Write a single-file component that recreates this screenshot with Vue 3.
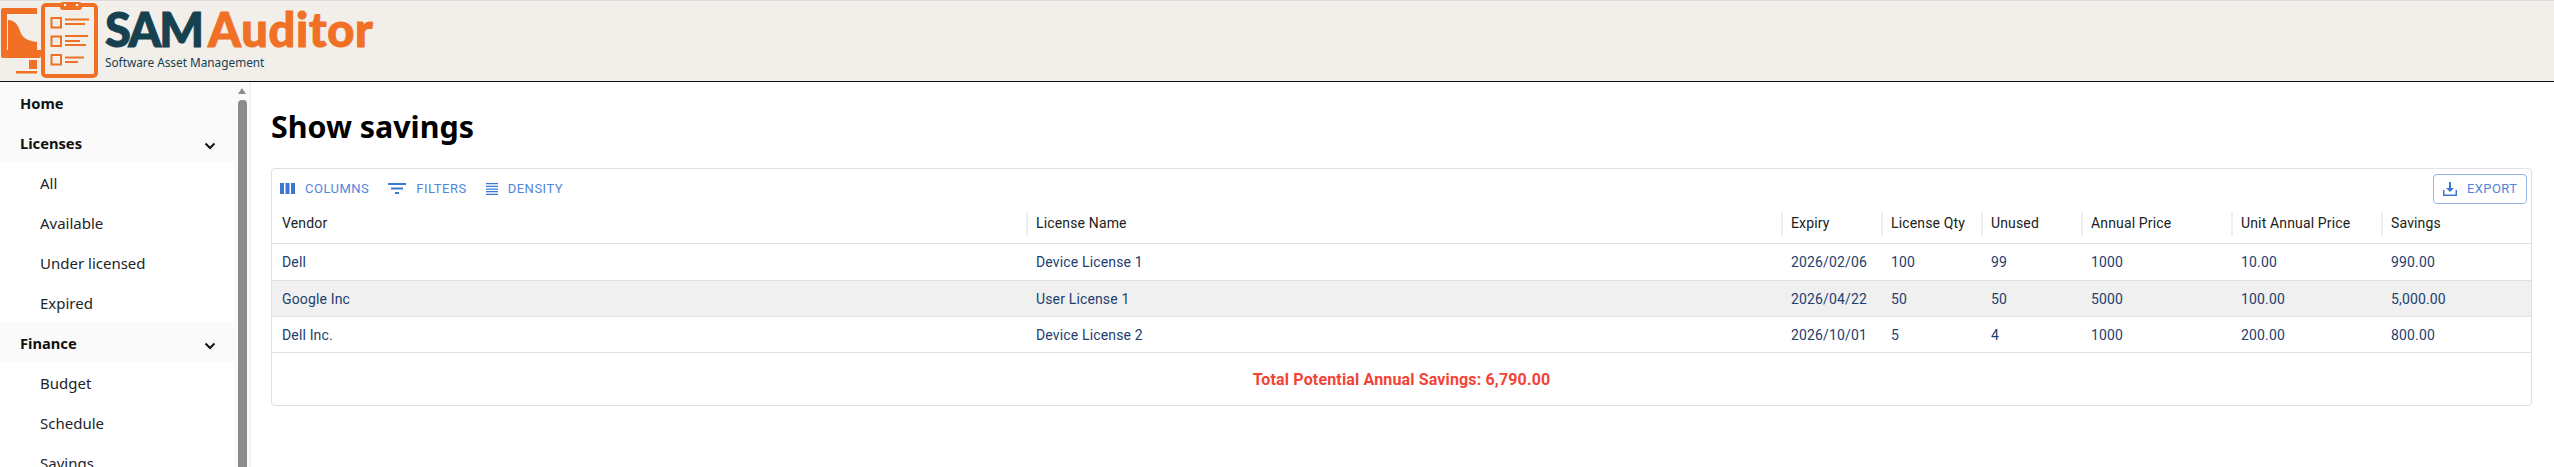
<script setup>
const groups = [
  { label: 'Home', parent: true },
  { label: 'Licenses', parent: true, chevron: true },
  { label: 'All' },
  { label: 'Available' },
  { label: 'Under licensed' },
  { label: 'Expired' },
  { label: 'Finance', parent: true, chevron: true },
  { label: 'Budget' },
  { label: 'Schedule' },
  { label: 'Savings' }
]
const columns = ['Vendor', 'License Name', 'Expiry', 'License Qty', 'Unused', 'Annual Price', 'Unit Annual Price', 'Savings']
const rows = [
  ['Dell', 'Device License 1', '2026/02/06', '100', '99', '1000', '10.00', '990.00'],
  ['Google Inc', 'User License 1', '2026/04/22', '50', '50', '5000', '100.00', '5,000.00'],
  ['Dell Inc.', 'Device License 2', '2026/10/01', '5', '4', '1000', '200.00', '800.00']
]
</script>

<template>
  <div class="page">
    <header class="topbar">
      <svg class="logo-mark" width="100" height="80" viewBox="0 0 100 80" aria-hidden="true">
        <g fill="#f07126">
          <path d="M3 8h34v6H7v36h34v6a2 2 0 0 1-2 2H3a2 2 0 0 1-2-2V10a2 2 0 0 1 2-2z" />
          <path d="M8 20c7 0 10 5 12 11 2 7 8 10 17 11v8H8z" />
          <rect x="29" y="60" width="8" height="9" />
          <rect x="16" y="71" width="21" height="2.500" />
        </g>
        <rect x="43" y="5" width="53" height="71" rx="3" fill="#f2eeea" stroke="#f07126" stroke-width="4" />
        <rect x="60" y="2" width="22" height="8" rx="3" fill="#f07126" />
        <circle cx="65" cy="5" r="1.200" fill="#fff" />
        <circle cx="77" cy="5" r="1.200" fill="#fff" />
        <g fill="none" stroke="#f07126">
          <rect x="51.500" y="18" width="9.500" height="9.500" stroke-width="2" />
          <rect x="51.500" y="36.500" width="9.500" height="9.500" stroke-width="2" />
          <rect x="51.500" y="55" width="9.500" height="9.500" stroke-width="2" />
          <path stroke-width="2" d="M65 19.500h24M65 24h20M65 36h23M65 41h15M65 45h21M65 57.500h19M65 62h13" />
        </g>
      </svg>
      <div class="brand">
        <div class="brand-name"><span class="sam">SAM</span> <span class="auditor">Auditor</span></div>
        <div class="brand-sub">Software Asset Management</div>
      </div>
    </header>

    <div class="body">
      <aside class="sidebar">
        <nav class="nav">
          <div v-for="g in groups" :key="g.label" class="nav-item" :class="{ parent: g.parent }">
            <span>{{ g.label }}</span>
            <svg v-if="g.chevron" class="chev" width="12" height="8" viewBox="0 0 12 8" aria-hidden="true">
              <path d="M1.500 1.500 6 6l4.500-4.500" fill="none" stroke="#111" stroke-width="2" />
            </svg>
          </div>
        </nav>
        <div class="scrollbar">
          <div class="arrow"></div>
          <div class="thumb"></div>
        </div>
      </aside>

      <main class="main">
        <h1 class="title">Show savings</h1>
        <section class="card">
          <div class="toolbar">
            <div class="tool">
              <svg width="15" height="11" viewBox="0 0 15 11" aria-hidden="true"><path fill="#3b78d4" d="M0 0h4v11H0zM5.500 0h4v11h-4zM11 0h4v11h-4z" /></svg>
              <span>COLUMNS</span>
            </div>
            <div class="tool filters">
              <svg width="18" height="11" viewBox="0 0 18 11" aria-hidden="true"><path fill="#3b78d4" d="M0 0h18v2H0zM3 4.500h12v2H3zM7 9h4v2H7z" /></svg>
              <span>FILTERS</span>
            </div>
            <div class="tool density">
              <svg width="12" height="12" viewBox="0 0 12 12" aria-hidden="true"><path fill="#3b78d4" d="M0 0h12v1.300H0zM0 2.700h12V4H0zM0 5.400h12v1.300H0zM0 8h12v1.300H0zM0 10.700h12V12H0z" /></svg>
              <span>DENSITY</span>
            </div>
            <button class="export" type="button">
              <svg width="14" height="14" viewBox="0 0 14 14" aria-hidden="true"><path fill="#3b78d4" d="M6 0h2v6h3L7 10 3 6h3zM0 8h1.500v4.500h11V8H14v6H0z" /></svg>
              <span>EXPORT</span>
            </button>
          </div>

          <div class="grid-row head">
            <div v-for="c in columns" :key="c" class="hcell"><span>{{ c }}</span></div>
          </div>
          <div v-for="(r, i) in rows" :key="i" class="grid-row data" :class="{ stripe: i === 1, tall: i === 0 }">
            <div v-for="(v, j) in r" :key="j" class="cell">{{ v }}</div>
          </div>
          <div class="total">Total Potential Annual Savings: 6,790.00</div>
        </section>
      </main>
    </div>
  </div>
</template>

<style>
html, body { margin: 0; background: #fff; overflow: hidden; }
</style>

<style scoped>
.page {
  width: 2554px;
  height: 467px;
  display: flex;
  flex-direction: column;
  overflow: hidden;
  font-family: Roboto, "Liberation Sans", sans-serif;
}
.topbar {
  height: 80px;
  flex: none;
  background: #f2eeea;
  border-top: 1px solid #dedede;
  border-bottom: 1px solid #111;
  display: flex;
  align-items: flex-start;
}
.logo-mark { flex: none; margin-top: -1px; }
.brand { margin-left: 5px; color: #16414f; }
.brand-name {
  font-family: Lato, "Liberation Sans", sans-serif;
  font-weight: 900;
  font-size: 47px;
  line-height: 52px;
  margin-top: 2px;
  white-space: nowrap;
  word-spacing: -5px;
  -webkit-text-stroke: 1px currentColor;
}
.sam { color: #16414f; letter-spacing: -2px; }
.auditor { color: #f07126; letter-spacing: 0.700px; }
.brand-sub {
  font-family: "Noto Sans", sans-serif;
  font-size: 11.800px;
  line-height: 16px;
  margin-top: -1px;
  white-space: nowrap;
}
.body { flex: 1; display: flex; min-height: 0; }
.sidebar {
  width: 250px;
  flex: none;
  display: flex;
  border-right: 1px solid #eee;
  overflow: hidden;
  font-family: "Noto Sans", sans-serif;
  font-size: 15px;
  color: #212529;
}
.nav { flex: 1; min-width: 0; }
.nav-item {
  height: 40px;
  box-sizing: border-box;
  display: flex;
  align-items: center;
  justify-content: space-between;
  padding: 1px 18px 0 40px;
}
.nav-item.parent {
  padding-left: 20px;
  background: #fafafa;
  font-size: 14.700px;
  font-weight: 700;
  color: #111;
}
.chev { margin-top: 6px; }
.scrollbar {
  width: 16px;
  flex: none;
  background: #fafafa;
  display: flex;
  flex-direction: column;
  align-items: center;
  padding-top: 6px;
}
.arrow {
  width: 0;
  height: 0;
  border-left: 4px solid transparent;
  border-right: 4px solid transparent;
  border-bottom: 6px solid #8c8c8c;
  margin-bottom: 6px;
}
.thumb {
  width: 9px;
  flex: 1;
  background: #8c8c8c;
  border-radius: 4px 4px 0 0;
}
.main { flex: 1; min-width: 0; padding: 0 22px 0 20px; }
.title {
  margin: 22px 0 0;
  font-family: "Noto Sans", sans-serif;
  font-size: 30.400px;
  font-weight: 700;
  line-height: 46px;
  color: #000;
}
.card {
  margin-top: 18px;
  border: 1px solid #e0e0e0;
  border-radius: 4px;
  box-sizing: border-box;
  width: 2261px;
}
.toolbar {
  height: 39px;
  display: flex;
  align-items: center;
  padding-left: 8px;
  box-sizing: border-box;
  color: #4f86dc;
  font-size: 13px;
  letter-spacing: 0.500px;
}
.tool { display: flex; align-items: center; gap: 10px; }
.filters { margin-left: 19px; }
.density { margin-left: 19px; }
.export {
  margin-left: auto;
  margin-right: 4px;
  width: 94px;
  height: 30px;
  background: #fff;
  border: 1px solid #93b6ea;
  border-radius: 4px;
  display: flex;
  align-items: center;
  gap: 10px;
  padding: 0 0 0 9px;
  color: #4f86dc;
  font: inherit;
  letter-spacing: 0.400px;
}
.grid-row {
  display: grid;
  grid-template-columns: 754px 755px 100px 100px 100px 150px 150px 150px;
  border-bottom: 1px solid #e0e0e0;
  box-sizing: border-box;
  letter-spacing: 0.150px;
}
.head {
  height: 36px;
  padding-top: 4px;
  align-items: flex-start;
  font-size: 14px;
  color: #212121;
}
.hcell {
  height: 24px;
  line-height: 23px;
  padding-left: 8px;
  box-sizing: border-box;
  border-left: 2px solid #eee;
  white-space: nowrap;
}
.hcell:first-child { border-left: 0; padding-left: 10px; }
.data {
  height: 36px;
  align-items: center;
  font-size: 14px;
  color: #23406f;
}
.tall { height: 37px; }
.stripe { background: #f0f0f0; }
.cell { padding-left: 10px; white-space: nowrap; }
.total {
  height: 52px;
  display: flex;
  align-items: center;
  justify-content: center;
  font-size: 16px;
  font-weight: 700;
  letter-spacing: 0.150px;
  color: #f44336;
}
</style>
